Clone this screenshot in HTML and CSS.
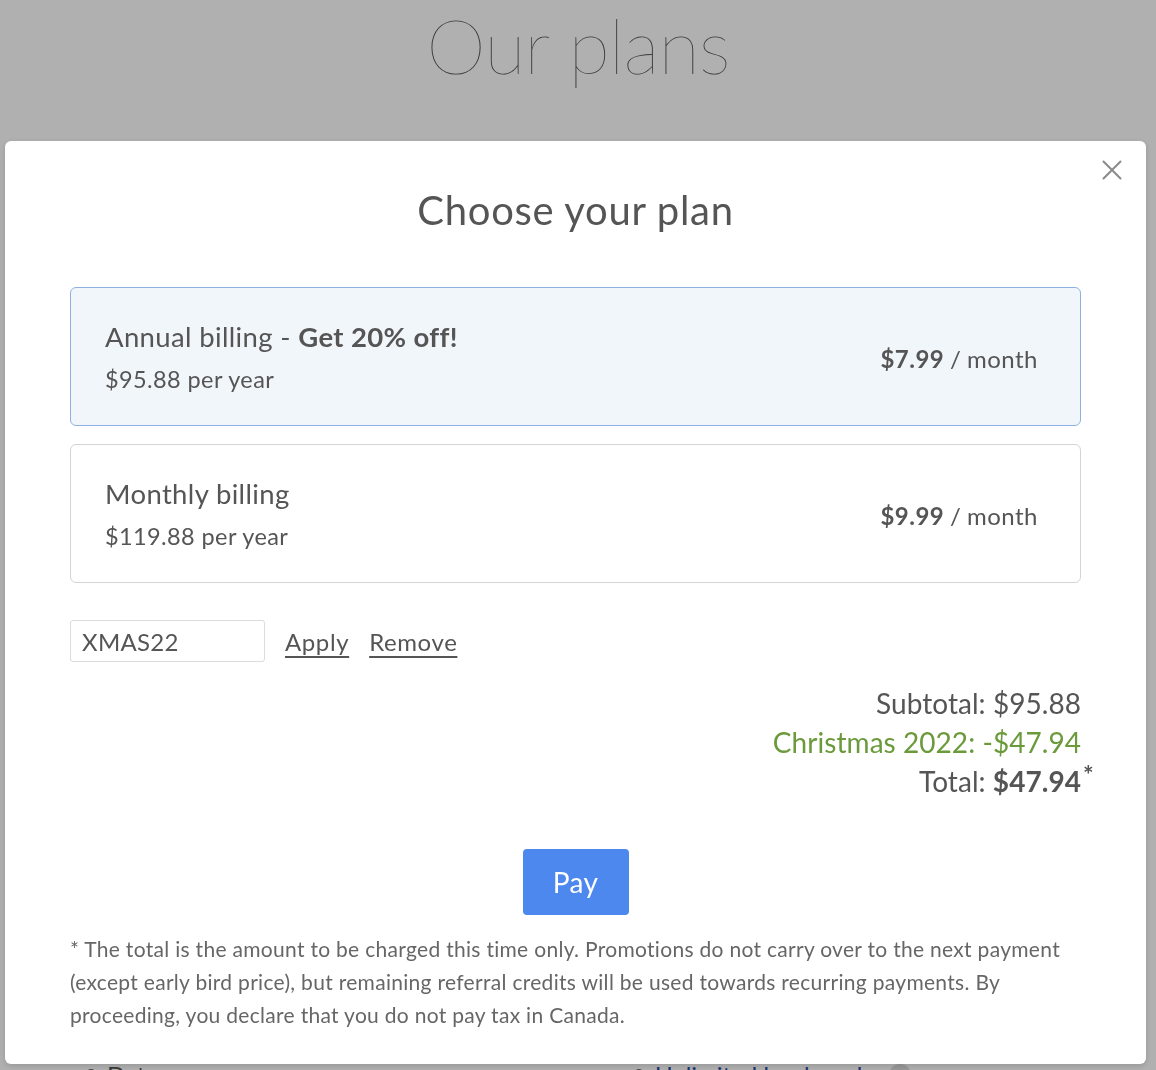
FILE: index.html
```html
<!DOCTYPE html>
<html lang="en">
<head>
<meta charset="utf-8">
<title>Our plans</title>
<link rel="stylesheet" href="styles.css">
</head>
<body>
<div class="page">
  <h1 class="page-title">Our plans</h1>
  <div class="page-spacer"></div>
  <ul class="features">
    <li class="feature"><span class="bullet"></span>Dates</li>
    <li class="feature feature-link"><span class="bullet"></span>Unlimited bookmarks <span class="help">?</span></li>
  </ul>
</div>

<div class="overlay"></div>

<div class="modal" role="dialog">
  <button class="close" aria-label="Close">
    <svg width="20" height="20" viewBox="0 0 20 20"><path d="M1.5 1.5 L18.5 18.5 M18.5 1.5 L1.5 18.5" stroke="#8a8a8a" stroke-width="2" stroke-linecap="round" fill="none"/></svg>
  </button>
  <h2 class="modal-title">Choose your plan</h2>

  <div class="plan plan-selected">
    <div class="plan-info">
      <div class="plan-name">Annual billing - <b>Get 20% off!</b></div>
      <div class="plan-year">$95.88 per year</div>
    </div>
    <div class="plan-price"><b>$7.99</b> / month</div>
  </div>

  <div class="plan">
    <div class="plan-info">
      <div class="plan-name">Monthly billing</div>
      <div class="plan-year">$119.88 per year</div>
    </div>
    <div class="plan-price"><b>$9.99</b> / month</div>
  </div>

  <div class="coupon">
    <input class="coupon-input" type="text" value="XMAS22">
    <a class="coupon-link" href="#">Apply</a>
    <a class="coupon-link" href="#">Remove</a>
  </div>

  <div class="totals">
    <div class="total-line">Subtotal: $95.88</div>
    <div class="total-line discount">Christmas 2022: -$47.94</div>
    <div class="total-line total-final">Total: <b>$47.94</b><span class="star">*</span></div>
  </div>

  <div class="pay-row">
    <button class="pay">Pay</button>
  </div>

  <p class="note">* The total is the amount to be charged this time only. Promotions do not carry over to the next payment (except early bird price), but remaining referral credits will be used towards recurring payments. By proceeding, you declare that you do not pay tax in Canada.</p>
</div>
</body>
</html>
```

FILE: styles.css
```css
html, body {
  margin: 0;
  padding: 0;
}
body {
  background: #ffffff;
  font-family: Lato, "Noto Sans", sans-serif;
  color: #555555;
  width: 1156px;
  height: 1070px;
  overflow: hidden;
}
.page {
  display: flex;
  flex-direction: column;
  align-items: center;
}
.page-title {
  margin: 0;
  font-size: 76px;
  line-height: 90px;
  font-weight: 200;
  color: #555555;
  letter-spacing: -1px;
}
.page-spacer {
  height: 970px;
}
.features {
  list-style: none;
  margin: 0;
  padding: 0;
  width: 1156px;
  display: grid;
  grid-template-columns: 548px 1fr;
  font-size: 24px;
  line-height: 30px;
}
.feature {
  padding-left: 85px;
  display: flex;
  align-items: center;
  gap: 10px;
}
.feature-link {
  padding-left: 85px;
  color: #2a4fa8;
}
.bullet {
  width: 10px;
  height: 10px;
  border: 1.5px solid #666;
  border-radius: 50%;
}
.help {
  display: inline-block;
  width: 22px;
  height: 22px;
  border-radius: 50%;
  background: #ddd;
  color: #888;
  font-size: 14px;
  line-height: 22px;
  text-align: center;
}
.overlay {
  position: fixed;
  inset: 0;
  background: rgba(0, 0, 0, 0.31);
}
.modal {
  position: fixed;
  top: 141px;
  left: 5px;
  width: 1141px;
  box-sizing: border-box;
  background: #ffffff;
  border-radius: 6px;
  padding: 40px 65px 33px 65px;
  box-shadow: 0 2px 6px rgba(0,0,0,0.15);
}
.close {
  position: absolute;
  top: 18px;
  right: 21px;
  width: 26px;
  height: 22px;
  border: 0;
  padding: 0;
  background: transparent;
  display: flex;
  align-items: center;
  justify-content: center;
}
.modal-title {
  margin: 0;
  text-align: center;
  font-size: 40px;
  line-height: 58px;
  font-weight: 400;
  color: #555555;
  letter-spacing: 0.7px;
}
.plan {
  margin-top: 48px;
  border: 1px solid #d4d4d4;
  border-radius: 6px;
  height: 139px;
  box-sizing: border-box;
  padding: 0 42px 0 34px;
  display: flex;
  align-items: center;
  justify-content: space-between;
}
.plan + .plan {
  margin-top: 18px;
}
.plan-selected {
  background: #f1f6fb;
  border-color: #8fb1e2;
}
.plan-info {
  display: flex;
  flex-direction: column;
  gap: 9px;
}
.plan-name {
  font-size: 27.5px;
  line-height: 36px;
  letter-spacing: 0.35px;
}
.plan-name b {
  font-weight: 700;
}
.plan-year {
  font-size: 23.5px;
  line-height: 30px;
  letter-spacing: 0.4px;
}
.plan-price {
  margin-top: 5px;
  font-size: 24px;
  line-height: 30px;
  letter-spacing: 0.5px;
  word-spacing: -1px;
}
.plan-price b {
  font-weight: 700;
}
.coupon {
  margin-top: 37px;
  display: flex;
  align-items: center;
  gap: 20px;
}
.coupon-input {
  width: 195px;
  height: 42px;
  box-sizing: border-box;
  border: 1px solid #dcdcdc;
  border-radius: 3px;
  padding: 0 11px;
  font-family: Lato, "Noto Sans", sans-serif;
  font-size: 24px;
  letter-spacing: 0.3px;
  color: #555555;
  outline: none;
}
.coupon-link {
  font-size: 24px;
  letter-spacing: 0.6px;
  color: #555555;
  text-decoration: underline;
  text-decoration-thickness: 1.5px;
  text-underline-offset: 5px;
}
.totals {
  margin-top: 22px;
  display: flex;
  flex-direction: column;
  align-items: flex-end;
  font-size: 28px;
  line-height: 39px;
  letter-spacing: 0.05px;
}
.total-line b {
  font-weight: 700;
}
.discount {
  color: #6b9a3b;
}
.total-final {
  position: relative;
}
.star {
  position: absolute;
  left: 100%;
  top: 0;
  margin-left: 2px;
  font-size: 25px;
  font-weight: 700;
  line-height: 1;
}
.pay-row {
  margin-top: 48px;
  display: flex;
  justify-content: center;
}
.pay {
  width: 106px;
  height: 66px;
  border: 0;
  border-radius: 4px;
  background: #4d88ef;
  color: #ffffff;
  font-family: Lato, "Noto Sans", sans-serif;
  font-size: 28px;
  letter-spacing: 0.3px;
}
.note {
  margin: 17px 0 0 0;
  font-size: 21px;
  line-height: 33px;
  letter-spacing: 0.3px;
  color: #666666;
}
```
